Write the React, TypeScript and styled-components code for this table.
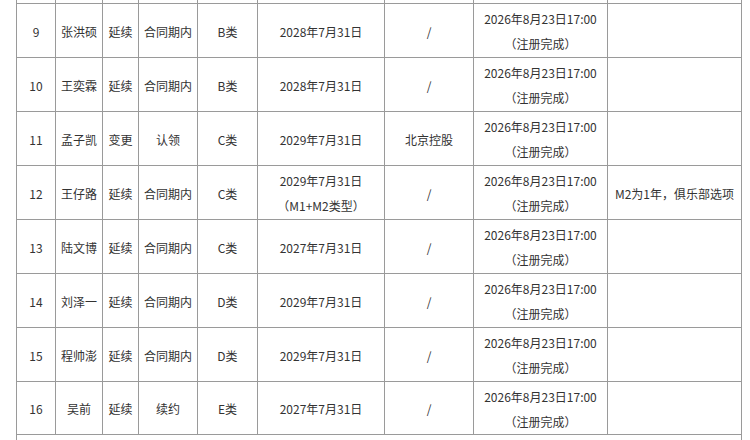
import React from 'react';
import styled, { createGlobalStyle } from 'styled-components';

const GlobalStyle = createGlobalStyle`
  html, body {
    margin: 0;
    padding: 0;
    background: #ffffff;
    overflow: hidden;
  }
`;

const Page = styled.div`
  width: 750px;
  height: 440px;
  overflow: hidden;
  padding-left: 16px;
  box-sizing: border-box;
  font-family: "Noto Sans CJK SC", "Noto Sans", sans-serif;
  font-size: 12px;
  color: #333333;
`;

const Table = styled.table`
  border-collapse: collapse;
  table-layout: fixed;
  width: 726px;
`;

const Row = styled.tr<{ $height: number }>`
  height: ${({ $height }) => $height}px;
`;

const Cell = styled.td<{ $open?: boolean }>`
  border: 1px solid #9a9a9a;
  border-top-style: ${({ $open }) => ($open ? 'none' : 'solid')};
  padding: 2px 0 0;
  text-align: center;
  vertical-align: middle;
  white-space: nowrap;
  line-height: 25px;
`;

const Line = styled.span`
  display: block;
`;

const widths = [39, 47, 36, 59, 60, 127, 89, 134, 134];

interface IRecord {
  no: number,
  name: string,
  kind: string,
  status: string,
  grade: string,
  until: string[],
  club: string,
  note: string,
}

const deadline = ['2026年8月23日17:00', '（注册完成）'];

const records: IRecord[] = [
  { no: 9, name: '张洪硕', kind: '延续', status: '合同期内', grade: 'B类', until: ['2028年7月31日'], club: '/', note: '' },
  { no: 10, name: '王奕霖', kind: '延续', status: '合同期内', grade: 'B类', until: ['2028年7月31日'], club: '/', note: '' },
  { no: 11, name: '孟子凯', kind: '变更', status: '认领', grade: 'C类', until: ['2029年7月31日'], club: '北京控股', note: '' },
  { no: 12, name: '王仔路', kind: '延续', status: '合同期内', grade: 'C类', until: ['2029年7月31日', '（M1+M2类型）'], club: '/', note: 'M2为1年，俱乐部选项' },
  { no: 13, name: '陆文博', kind: '延续', status: '合同期内', grade: 'C类', until: ['2027年7月31日'], club: '/', note: '' },
  { no: 14, name: '刘泽一', kind: '延续', status: '合同期内', grade: 'D类', until: ['2029年7月31日'], club: '/', note: '' },
  { no: 15, name: '程帅澎', kind: '延续', status: '合同期内', grade: 'D类', until: ['2029年7月31日'], club: '/', note: '' },
  { no: 16, name: '吴前', kind: '延续', status: '续约', grade: 'E类', until: ['2027年7月31日'], club: '/', note: '' },
];

const rowHeights = [54, 54, 54, 54, 54, 54, 54, 53];

const Lines = ({ items }: { items: string[] }) => (
  <>
    {items.map((text) => <Line key={text}>{text}</Line>)}
  </>
);

const App = () => {
  return (
    <Page>
      <GlobalStyle />
      <Table>
        <colgroup>
          {widths.map((w, i) => <col key={i} style={{ width: w }} />)}
        </colgroup>
        <tbody>
          {/* tail of the row above, cut off by the top edge */}
          <Row $height={3}>
            {widths.map((_, i) => <Cell key={i} $open />)}
          </Row>
          {records.map((r, i) => (
            <Row key={r.no} $height={rowHeights[i]}>
              <Cell>{r.no}</Cell>
              <Cell>{r.name}</Cell>
              <Cell>{r.kind}</Cell>
              <Cell>{r.status}</Cell>
              <Cell>{r.grade}</Cell>
              <Cell><Lines items={r.until} /></Cell>
              <Cell>{r.club}</Cell>
              <Cell><Lines items={deadline} /></Cell>
              <Cell>{r.note}</Cell>
            </Row>
          ))}
          <Row $height={40}>
            <Cell colSpan={9} />
          </Row>
        </tbody>
      </Table>
    </Page>
  );
};

export default App;
